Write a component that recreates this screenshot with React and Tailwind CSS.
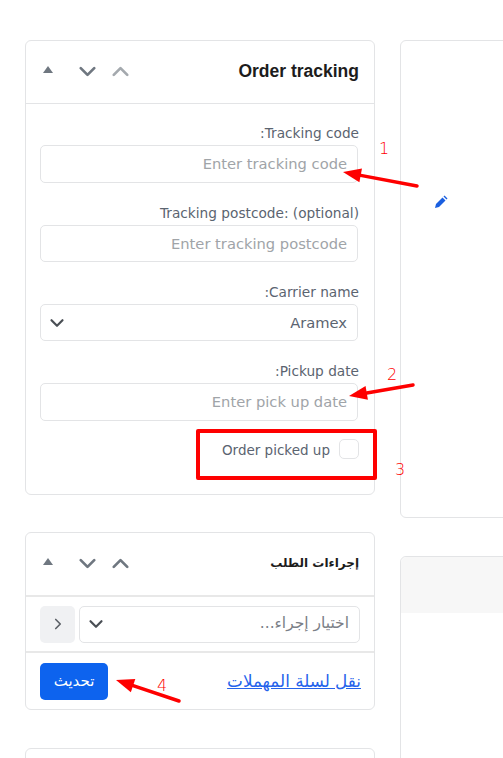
import { ChevronDown, ChevronUp, ChevronRight } from "lucide-react";

const font = { fontFamily: '"DejaVu Sans", sans-serif' };

function CardHeader({ title, h, upClass, titleClass }) {
  return (
    <div className={`flex items-center justify-between pl-[17px] pr-[15px] ${h}`}>
      <div className="-mt-[2px] flex items-center">
        <span className="-mt-[3px] h-0 w-0 border-x-[5px] border-b-[7px] border-x-transparent border-b-[#6f7780]" />
        <ChevronDown className="ml-[21px] size-[27px] text-[#6f7780]" strokeWidth={2.4} />
        <ChevronUp className={`ml-[6px] size-[27px] ${upClass}`} strokeWidth={2.4} />
      </div>
      <h2 className={`-mt-[2px] font-bold text-[#1c1c1c] ${titleClass}`}>{title}</h2>
    </div>
  );
}

function Field({ label, placeholder, h = "h-[38px]", className = "", children }) {
  return (
    <div className={className}>
      <label className="mr-[-1px] block h-[20px] text-right text-[13.7px] leading-[20px] text-[#5b6470]" dir="rtl">{label}</label>
      <div className={`mt-[2px] flex items-center justify-end rounded-[5px] border border-[#e3e4e6] pr-[10px] pt-[1px] text-[14.7px] text-[#a0a4a8] ${h}`}>
        {placeholder}
        {children}
      </div>
    </div>
  );
}

function Arrow({ x1, y1, x2, y2 }) {
  const a = Math.atan2(y2 - y1, x2 - x1);
  const bx = x2 - 18 * Math.cos(a);
  const by = y2 - 18 * Math.sin(a);
  const nx = 7 * Math.sin(a);
  const ny = 7 * Math.cos(a);
  return (
    <>
      <line x1={x1} y1={y1} x2={bx} y2={by} stroke="#fe0000" strokeWidth="3.5" strokeLinecap="round" />
      <polygon points={`${x2},${y2} ${bx + nx},${by - ny} ${bx - nx},${by + ny}`} fill="#fe0000" />
    </>
  );
}

export default function App() {
  return (
    <div className="relative flex h-[758px] gap-[25px] overflow-hidden bg-white pl-[25px] pt-[40px]" style={font}>
      <div className="w-[350px] shrink-0">
        <section className="h-[455px] rounded-[6px] border border-[#e3e4e6]">
          <CardHeader
            title="Order tracking"
            titleClass="font-['Liberation_Sans'] text-[17.5px]"
            h="h-[63px] border-b border-[#e3e4e6]"
            upClass="text-[#a4a9ae]"
          />
          <div className="pl-[14px] pr-[16px] pt-[19px]">
            <Field label="Tracking code:" placeholder="Enter tracking code" />
            <Field className="mt-[20px]" h="h-[37px]" label="Tracking postcode: (optional)" placeholder="Enter tracking postcode" />
            <Field className="mt-[20px]" h="h-[37px]" label="Carrier name:">
              <div className="flex w-full items-center justify-between pl-[5px] text-[#5b6470]">
                <ChevronDown className="size-[22px] text-[#4a4f55]" strokeWidth={2.4} />
                <span>Aramex</span>
              </div>
            </Field>
            <Field className="mt-[20px]" label="Pickup date:" placeholder="Enter pick up date" />
            <div className="mr-[-1px] mt-[17px] flex items-center justify-end gap-[9px] text-[13.5px] text-[#5b6470]">
              <span className="pt-[2px]">Order picked up</span>
              <span className="size-[20px] rounded-[5px] border border-[#e3e4e6]" />
            </div>
          </div>
        </section>

        <section className="mt-[37px] h-[178px] rounded-[6px] border border-[#e3e4e6]">
          <CardHeader
            title="إجراءات الطلب"
            titleClass="text-[12px]"
            h="h-[64px] border-b-2 border-[#e8e8e8]"
            upClass="text-[#6f7780]"
          />
          <div className="flex h-[56px] items-center gap-[4px] border-b-2 border-[#e8e8e8] pl-[14px] pr-[14px]">
            <span className="flex h-[37px] w-[35px] items-center justify-center rounded-[5px] bg-[#f0f1f3]">
              <ChevronRight className="size-[18px] text-[#5b6066]" strokeWidth={2.2} />
            </span>
            <div className="flex h-[37px] flex-1 items-center justify-between rounded-[5px] border border-[#e3e4e6] pl-[5px] pr-[10px] text-[15.5px] text-[#7b8087]">
              <ChevronDown className="size-[22px] text-[#4a4f55]" strokeWidth={2.4} />
              <span dir="rtl">اختيار إجراء...</span>
            </div>
          </div>
          <div className="flex items-center justify-between pl-[14px] pr-[13px] pt-[10px]">
            <button className="h-[37px] w-[68px] rounded-[5px] bg-[#0d63ee] text-[15px] text-white">تحديث</button>
            <a className="text-[16.8px] text-[#2563eb] underline" dir="rtl">نقل لسلة المهملات</a>
          </div>
        </section>

        <section className="mt-[38px] h-[60px] rounded-[6px] border border-[#e3e4e6]" />
      </div>

      <div className="w-[300px] shrink-0">
        <section className="h-[478px] rounded-[6px] border border-[#e3e4e6]" />
        <section className="mt-[38px] h-[300px] rounded-[6px] border border-[#e3e4e6]">
          <div className="h-[56px] rounded-t-[6px] bg-[#f7f7f7]" />
        </section>
      </div>

      {/* annotations drawn on top of the screenshot */}
      <svg className="pointer-events-none absolute left-0 top-0" width="503" height="758">
        <Arrow x1={417} y1={186} x2={343} y2={172} />
        <Arrow x1={413} y1={385} x2={349} y2={396} />
        <Arrow x1={179} y1={701} x2={116} y2={680} />
        <path d="M435 208l1-4 6.5-6.5 3 3L439 207z" fill="#1a5fe0" />
        <path d="M443.5 196.5l1-1 3 3-1 1z" fill="#1a5fe0" />
      </svg>
      <span className="absolute left-[379px] top-[138px] text-[16px] font-extralight leading-[22px] text-[#fe0000]">1</span>
      <span className="absolute left-[387px] top-[364px] text-[16px] font-extralight leading-[22px] text-[#fe0000]">2</span>
      <span className="absolute left-[395px] top-[459px] text-[16px] font-extralight leading-[22px] text-[#fe0000]">3</span>
      <span className="absolute left-[157px] top-[675px] text-[16px] font-extralight leading-[22px] text-[#fe0000]">4</span>
      <div className="absolute left-[196px] top-[429px] h-[51px] w-[181px] rounded-[2px] border-[4px] border-[#fe0000]" />
    </div>
  );
}
